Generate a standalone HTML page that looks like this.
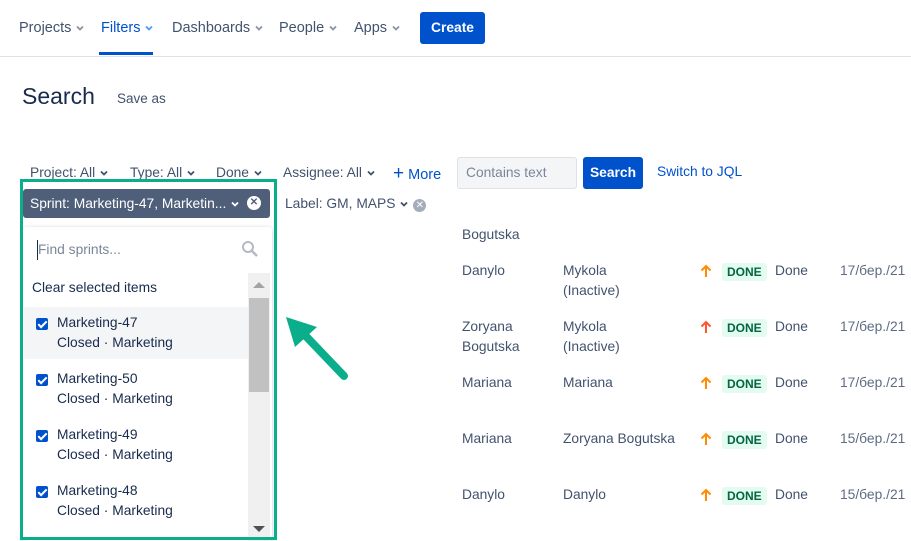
<!DOCTYPE html>
<html><head><style>
body{margin:0;width:911px;height:541px;background:#fff;font-family:"Liberation Sans",sans-serif;font-size:13.8px;color:#172b4d;position:relative;overflow:hidden}
.a{position:absolute;white-space:nowrap}
.nav{color:#42526e;font-size:14.5px}
.ch{display:inline-block;vertical-align:middle;margin-left:4px}
.f{color:#42526e}
.t{color:#42526e}
.done{position:absolute;background:#e3fcef;color:#006644;font-size:12px;padding:2px 5px;border-radius:3px;font-weight:bold}
.up{position:absolute;width:14px;height:14px}
.item{position:absolute;left:24px;width:224px;height:56px}
.cb{position:absolute;left:12px;top:11px;width:12px;height:12px;background:#0052cc;border-radius:2px}
.cb:after{content:"";position:absolute;left:4px;top:1px;width:3px;height:7px;border:solid #fff;border-width:0 2px 2px 0;transform:rotate(45deg)}
</style></head><body>
<svg width="0" height="0" style="position:absolute"><defs>
<symbol id="cv" viewBox="0 0 10 10"><path d="M2 3.5 L5 6.5 L8 3.5" fill="none" stroke="currentColor" stroke-width="1.8"/></symbol>
<symbol id="ar" viewBox="0 0 14 14"><path d="M7 13 V2 M2.5 6.5 L7 2 L11.5 6.5" fill="none" stroke="currentColor" stroke-width="2"/></symbol>
</defs></svg>
<div class="a" style="left:0;top:56px;width:911px;height:1px;background:#dfe1e6"></div>
<div class="a nav" style="left:19px;top:20px">Projects<svg class="ch" width="10" height="10" style="color:#8993a4"><use href="#cv"/></svg></div>
<div class="a nav" style="left:101px;top:20px;color:#0052cc">Filters<svg class="ch" width="10" height="10" style="color:#4c9aff"><use href="#cv"/></svg></div>
<div class="a" style="left:99px;top:52px;width:54px;height:3px;background:#0052cc"></div>
<div class="a nav" style="left:172px;top:20px">Dashboards<svg class="ch" width="10" height="10" style="color:#8993a4"><use href="#cv"/></svg></div>
<div class="a nav" style="left:279px;top:20px">People<svg class="ch" width="10" height="10" style="color:#8993a4"><use href="#cv"/></svg></div>
<div class="a nav" style="left:354px;top:20px">Apps<svg class="ch" width="10" height="10" style="color:#8993a4"><use href="#cv"/></svg></div>
<div class="a" style="left:420px;top:12px;width:65px;height:32px;background:#0052cc;border-radius:3px;color:#fff;font-weight:bold;text-align:center;line-height:32px">Create</div>
<div class="a" style="left:22px;top:83px;font-size:23px;color:#172b4d">Search</div>
<div class="a" style="left:117px;top:91px;font-size:13.5px;color:#42526e">Save as</div>

<div class="a f" style="left:30px;top:165px">Project: All<svg class="ch" width="10" height="10"><use href="#cv"/></svg></div>
<div class="a f" style="left:130px;top:165px">Type: All<svg class="ch" width="10" height="10"><use href="#cv"/></svg></div>
<div class="a f" style="left:216px;top:165px">Done<svg class="ch" width="10" height="10"><use href="#cv"/></svg></div>
<div class="a f" style="left:283px;top:165px">Assignee: All<svg class="ch" width="10" height="10"><use href="#cv"/></svg></div>
<div class="a" style="left:393px;top:163px;color:#0052cc;font-size:14.5px"><b style="font-size:19px;font-weight:normal">+</b> More</div>
<div class="a" style="left:457px;top:157px;width:118px;height:30px;background:#f4f5f7;border:1px solid #dfe1e6;border-radius:3px;color:#7a869a;line-height:30px;text-indent:8px">Contains text</div>
<div class="a" style="left:583px;top:157px;width:60px;height:32px;background:#0052cc;border-radius:3px;color:#fff;font-weight:bold;text-align:center;line-height:32px">Search</div>
<div class="a" style="left:657px;top:164px;color:#0052cc">Switch to JQL</div>
<div class="a f" style="left:285px;top:196px">Label: GM, MAPS<svg class="ch" width="10" height="10"><use href="#cv"/></svg> <span style="display:inline-block;width:13px;height:13px;border-radius:50%;background:#a5adba;color:#fff;font-size:10px;text-align:center;line-height:13px">✕</span></div>

<div class="a t" style="left:462px;top:227px">Bogutska</div>
<div class="a t" style="left:462px;top:261px;line-height:20px">Danylo</div>
<div class="a t" style="left:563px;top:261px;line-height:20px">Mykola<br>(Inactive)</div>
<div class="a t" style="left:462px;top:317px;line-height:20px">Zoryana<br>Bogutska</div>
<div class="a t" style="left:563px;top:317px;line-height:20px">Mykola<br>(Inactive)</div>
<div class="a t" style="left:462px;top:373px;line-height:20px">Mariana</div>
<div class="a t" style="left:563px;top:373px;line-height:20px">Mariana</div>
<div class="a t" style="left:462px;top:429px;line-height:20px">Mariana</div>
<div class="a t" style="left:563px;top:429px;line-height:20px">Zoryana Bogutska</div>
<div class="a t" style="left:462px;top:485px;line-height:20px">Danylo</div>
<div class="a t" style="left:563px;top:485px;line-height:20px">Danylo</div>
<svg class="up" style="left:699px;top:264px;color:#ff8b00"><use href="#ar"/></svg>
<svg class="up" style="left:699px;top:320px;color:#ff5630"><use href="#ar"/></svg>
<svg class="up" style="left:699px;top:376px;color:#ff8b00"><use href="#ar"/></svg>
<svg class="up" style="left:699px;top:432px;color:#ff8b00"><use href="#ar"/></svg>
<svg class="up" style="left:699px;top:488px;color:#ff8b00"><use href="#ar"/></svg>
<div class="done" style="left:722px;top:263px">DONE</div><div class="a t" style="left:775px;top:263px">Done</div><div class="a" style="left:840px;top:263px;color:#5e6c84">17/бер./21</div>
<div class="done" style="left:722px;top:319px">DONE</div><div class="a t" style="left:775px;top:319px">Done</div><div class="a" style="left:840px;top:319px;color:#5e6c84">17/бер./21</div>
<div class="done" style="left:722px;top:375px">DONE</div><div class="a t" style="left:775px;top:375px">Done</div><div class="a" style="left:840px;top:375px;color:#5e6c84">17/бер./21</div>
<div class="done" style="left:722px;top:431px">DONE</div><div class="a t" style="left:775px;top:431px">Done</div><div class="a" style="left:840px;top:431px;color:#5e6c84">15/бер./21</div>
<div class="done" style="left:722px;top:487px">DONE</div><div class="a t" style="left:775px;top:487px">Done</div><div class="a" style="left:840px;top:487px;color:#5e6c84">15/бер./21</div>

<div class="a" style="left:23px;top:189px;width:247px;height:29px;background:#505f79;border-radius:3px;color:#fff;line-height:29px;text-indent:7px">Sprint: Marketing-47, Marketin...<svg class="ch" width="10" height="10" style="color:#fff"><use href="#cv"/></svg></div>
<div class="a" style="left:247px;top:196px;width:14px;height:14px;border-radius:50%;background:#fff;color:#505f79;font-size:10px;text-align:center;line-height:14px;font-weight:bold">✕</div>
<div class="a" style="left:23px;top:227px;width:249px;height:314px;background:#fff;box-shadow:0 1px 4px rgba(9,30,66,.25);border-radius:3px"></div>
<div class="a" style="left:37px;top:240px;width:1px;height:20px;background:#172b4d"></div>
<div class="a" style="left:38px;top:242px;color:#7a869a">Find sprints...</div>
<svg class="a" style="left:241px;top:240px" width="18" height="18"><circle cx="7" cy="7" r="5" fill="none" stroke="#b3bac5" stroke-width="2"/><path d="M11 11 L16 16" stroke="#b3bac5" stroke-width="2.5"/></svg>
<div class="a" style="left:32px;top:280px">Clear selected items</div>
<div class="a" style="left:248px;top:273px;width:22px;height:268px;background:#f0f0f0"></div>
<div class="a" style="left:249px;top:298px;width:20px;height:94px;background:#c1c1c1"></div>
<div class="a" style="left:253px;top:282px;width:0;height:0;border:6px solid transparent;border-bottom-color:#a3a3a3;border-top:0"></div>
<div class="a" style="left:253px;top:526px;width:0;height:0;border:6px solid transparent;border-top-color:#505050;border-bottom:0"></div>
<div class="item" style="top:307px;height:52px;background:#f4f5f7"><div class="cb"></div><div class="a" style="left:33px;top:6px;line-height:20px">Marketing-47<br>Closed · Marketing</div></div>
<div class="item" style="top:363px"><div class="cb"></div><div class="a" style="left:33px;top:6px;line-height:20px">Marketing-50<br>Closed · Marketing</div></div>
<div class="item" style="top:419px"><div class="cb"></div><div class="a" style="left:33px;top:6px;line-height:20px">Marketing-49<br>Closed · Marketing</div></div>
<div class="item" style="top:475px"><div class="cb"></div><div class="a" style="left:33px;top:6px;line-height:20px">Marketing-48<br>Closed · Marketing</div></div>
<div class="a" style="left:20px;top:179px;width:251px;height:355px;border:3px solid #0bae8b"></div>

<svg class="a" style="left:0;top:0" width="911" height="541">
<line x1="344" y1="376" x2="300" y2="330" stroke="#0bae8b" stroke-width="8" stroke-linecap="round"/>
<polygon points="286,317 317,327 295,347" fill="#0bae8b"/>
</svg>
</body></html>
